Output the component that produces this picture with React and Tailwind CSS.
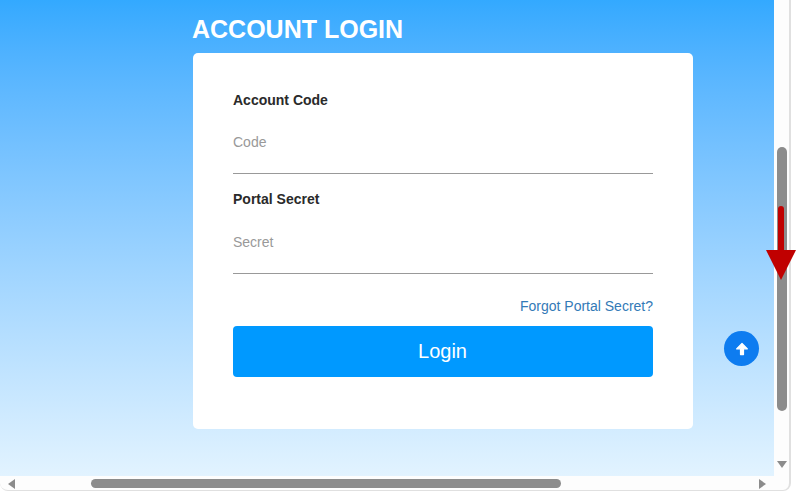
function ArrowUp() {
  return (
    <svg width="14" height="14" viewBox="0 0 14 14" fill="white" stroke="white" strokeWidth="1.2" strokeLinejoin="round">
      <path d="M7 1.4 1.6 6.8h3.9v5.8h3V6.8h3.9z" />
    </svg>
  );
}

function Field({ label, placeholder, className, inputClass }) {
  return (
    <div className={className}>
      <div className="text-[14px] leading-[20px] font-bold text-[#2a2a2a]">{label}</div>
      <div className={"mt-[11px] border-b border-[#999999] text-[14px] leading-[20px] text-[#999999] " + inputClass}>{placeholder}</div>
    </div>
  );
}

export default function App() {
  return (
    <div className="relative h-[492px] w-[796px] overflow-hidden bg-white font-['Liberation_Sans',Arial,sans-serif]">
      <div className="flex h-[491px] w-[791px] flex-col overflow-hidden rounded-b-[8px] border-r-2 border-b border-[#e0e0e0] bg-[#fdfdfd]">
        <div className="flex h-[476px] shrink-0">
          <main className="relative w-[774px] bg-gradient-to-b from-[#33a9ff] to-[#e2f3ff]">
            <h1 className="pl-[192px] pt-[15px] text-[25px] leading-[29px] font-bold text-white">ACCOUNT LOGIN</h1>
            <section className="ml-[193px] mt-[9px] h-[376px] w-[500px] rounded-[5px] bg-white px-10 pt-[37px]">
              <Field label="Account Code" placeholder="Code" inputClass="h-[53px] pt-[11px]" />
              <Field label="Portal Secret" placeholder="Secret" className="mt-[15px]" inputClass="h-[54px] pt-[12px]" />
              <div className="mt-[22px] text-right text-[14px] leading-[20px] text-[#337ab7]">Forgot Portal Secret?</div>
              <button className="mt-[10px] block h-[51px] w-[420px] rounded-[4px] bg-[#0099ff] pb-[2px] pr-[1px] text-[20px] text-white">Login</button>
            </section>
            <button className="absolute left-[724px] top-[331px] flex h-[35px] w-[35px] items-center justify-center rounded-full bg-[#0e7cf0]">
              <ArrowUp />
            </button>
          </main>
          <div className="flex w-[15px] flex-col items-center">
            <div className="mt-[147px] h-[264px] w-[10px] rounded-full bg-[#8c8c8c]" />
            <svg className="mt-[49px]" width="12" height="9" viewBox="0 0 12 9" fill="#8c8c8c"><path d="M1 1h10L6 8z" /></svg>
          </div>
        </div>
        <div className="flex h-[14px] items-center pt-[1px]">
          <svg className="ml-[7px]" width="9" height="12" viewBox="0 0 9 12" fill="#8c8c8c"><path d="M8 1v10L1 6z" /></svg>
          <div className="ml-[75px] h-[9px] w-[470px] rounded-full bg-[#8c8c8c]" />
          <svg className="ml-[197px]" width="9" height="12" viewBox="0 0 9 12" fill="#8c8c8c"><path d="M1 1v10l7-5z" /></svg>
        </div>
      </div>
      <svg className="absolute left-[766px] top-[205px]" width="30" height="76" viewBox="0 0 30 76" fill="#c00000">
        <path d="M12 45V4a3 3 0 0 1 6 0v41h12L15 75 0 45z" />
      </svg>
    </div>
  );
}
